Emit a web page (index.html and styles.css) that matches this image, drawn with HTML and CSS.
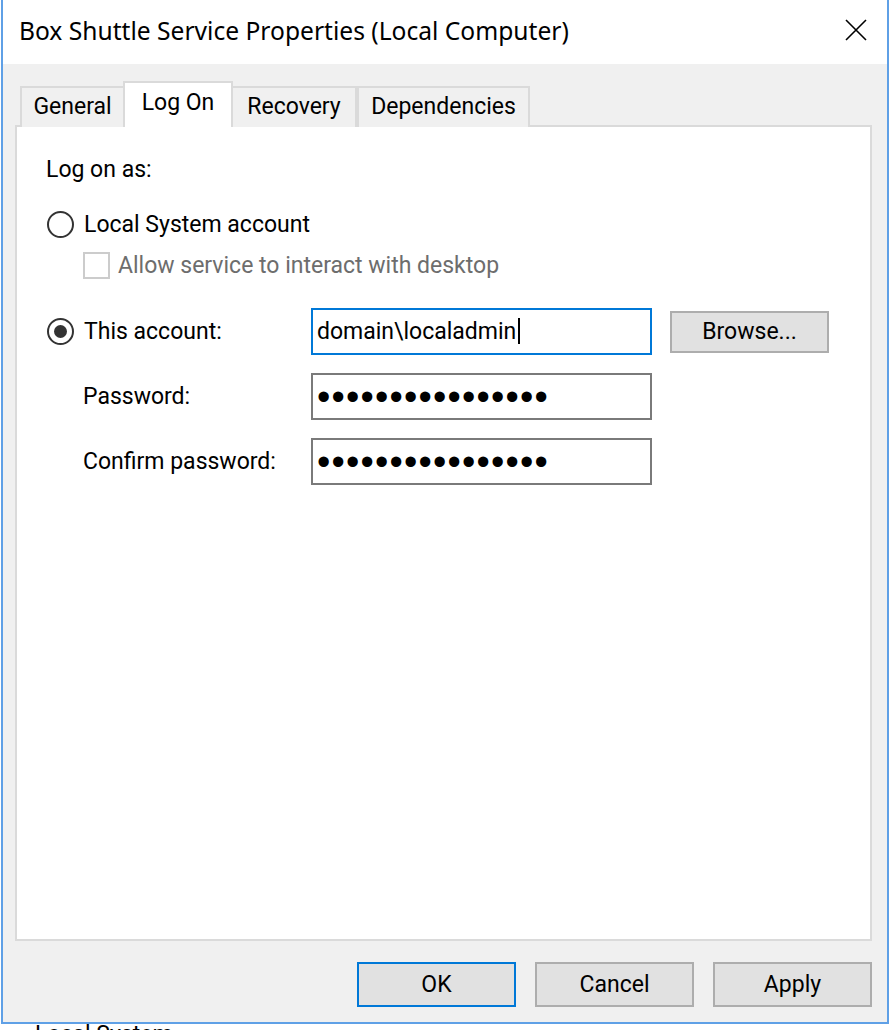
FILE: index.html
```html
<!DOCTYPE html>
<html lang="en">
<head>
  <meta charset="UTF-8">
  <title>Box Shuttle Service Properties (Local Computer)</title>
  <link rel="stylesheet" href="styles.css">
</head>
<body>
  <div class="window">
    <div class="titlebar">
      <span class="title">Box Shuttle Service Properties (Local Computer)</span>
      <svg class="close" width="22" height="22" viewBox="0 0 22 22">
        <path d="M1 1 L21 21 M21 1 L1 21" stroke="#000" stroke-width="1.6" fill="none"/>
      </svg>
    </div>

    <div class="body">
      <div class="tabs">
        <div class="tab tab-general">General</div>
        <div class="tab tab-logon active">Log On</div>
        <div class="tab tab-recovery">Recovery</div>
        <div class="tab tab-deps">Dependencies</div>
      </div>

      <div class="panel">
        <div class="line heading">Log on as:</div>

        <div class="line option local">
          <span class="radio"></span>
          <span>Local System account</span>
        </div>

        <div class="line option desktop">
          <span class="check"></span>
          <span class="disabled">Allow service to interact with desktop</span>
        </div>

        <div class="form">
          <div class="label option">
            <span class="radio checked"></span>
            <span>This account:</span>
          </div>
          <div class="field focus">domain\localadmin<span class="caret"></span></div>
          <button class="btn browse">Browse...</button>

          <div class="label sub">Password:</div>
          <div class="field"><span class="dots">••••••••••••••••</span></div>
          <div></div>

          <div class="label sub">Confirm password:</div>
          <div class="field"><span class="dots">••••••••••••••••</span></div>
          <div></div>
        </div>
      </div>

      <div class="actions">
        <button class="btn default">OK</button>
        <button class="btn">Cancel</button>
        <button class="btn">Apply</button>
      </div>
    </div>
  </div>
  <div class="under">Local System</div>
</body>
</html>
```

FILE: styles.css
```css
html, body { margin: 0; padding: 0; background: #fff; overflow: hidden; }
body { width: 896px; height: 1030px; font-family: Roboto, "Liberation Sans", sans-serif; font-size: 23px; color: #000; }

.window { margin-left: 1px; width: 884px; border: 2px solid #5fa0e6; border-top: none; }

.titlebar { height: 64px; background: #fff; display: flex; align-items: center; justify-content: space-between; }
.title { font-family: "Noto Sans", "Open Sans", sans-serif; font-size: 24.6px; padding-left: 16px; padding-bottom: 4px; }
.close { margin-right: 20px; margin-bottom: 4px; }

.body { background: #f0f0f0; padding: 17px 15px 15px 12px; }

.tabs { display: flex; align-items: flex-end; margin-left: 5px; height: 46px; margin-bottom: -2px; position: relative; z-index: 1; }
.tab { box-sizing: border-box; height: 41px; line-height: 38px; text-align: center; border: 2px solid #dadada; border-bottom: none; background: #f0f0f0; }
.tab-general { width: 103px; border-right: none; }
.tab-logon { width: 110px; }
.tab-recovery { width: 124px; border-left: none; }
.tab-deps { width: 173px; border-left: 2px solid #dadada; }
.tab.active { height: 46px; background: #fff; line-height: 40px; }

.panel { height: 812px; background: #fff; border: 2px solid #dadada; padding: 0 0 0 29px; }

.line { line-height: 27px; height: 27px; }
.heading { margin-top: 29px; }
.option { display: flex; align-items: center; }
.local { margin-top: 28px; }
.desktop { margin-top: 14px; padding-left: 37px; }

.radio { box-sizing: border-box; width: 27px; height: 27px; border: 2px solid #333; border-radius: 50%; margin: 0 10px 0 1px; background: #fff; display: flex; align-items: center; justify-content: center; }
.radio.checked::after { content: ""; width: 13px; height: 13px; border-radius: 50%; background: #333; }
.check { box-sizing: border-box; width: 27px; height: 27px; border: 2px solid #cccccc; background: #fff; margin-right: 8px; }
.disabled { color: #6d6d6d; }

.form { display: grid; grid-template-columns: 265px 341px auto; grid-template-rows: 47px 47px 47px; row-gap: 18px; align-items: center; margin-top: 29px; }
.sub { padding-left: 37px; line-height: 27px; }

.field { box-sizing: border-box; height: 47px; border: 2px solid #7a7a7a; background: #fff; padding-left: 4px; line-height: 43px; white-space: nowrap; }
.field.focus { border-color: #0078d7; }
.caret { display: inline-block; width: 2px; height: 26px; background: #000; vertical-align: -5px; margin-left: 2px; }
.dots { font-family: "Liberation Sans", sans-serif; font-size: 38px; letter-spacing: 1.2px; line-height: 43px; position: relative; top: 1px; }

.btn { box-sizing: border-box; width: 159px; height: 45px; background: #e1e1e1; border: 2px solid #adadad; font-family: Roboto, "Liberation Sans", sans-serif; font-size: 23px; color: #000; padding: 0; }
.browse { height: 42px; margin-left: 18px; }
.btn.default { border-color: #0078d7; }

.actions { display: flex; justify-content: flex-end; gap: 19px; margin-top: 21px; }

.under { padding: 3px 0 0 35px; line-height: 16px; }
```
